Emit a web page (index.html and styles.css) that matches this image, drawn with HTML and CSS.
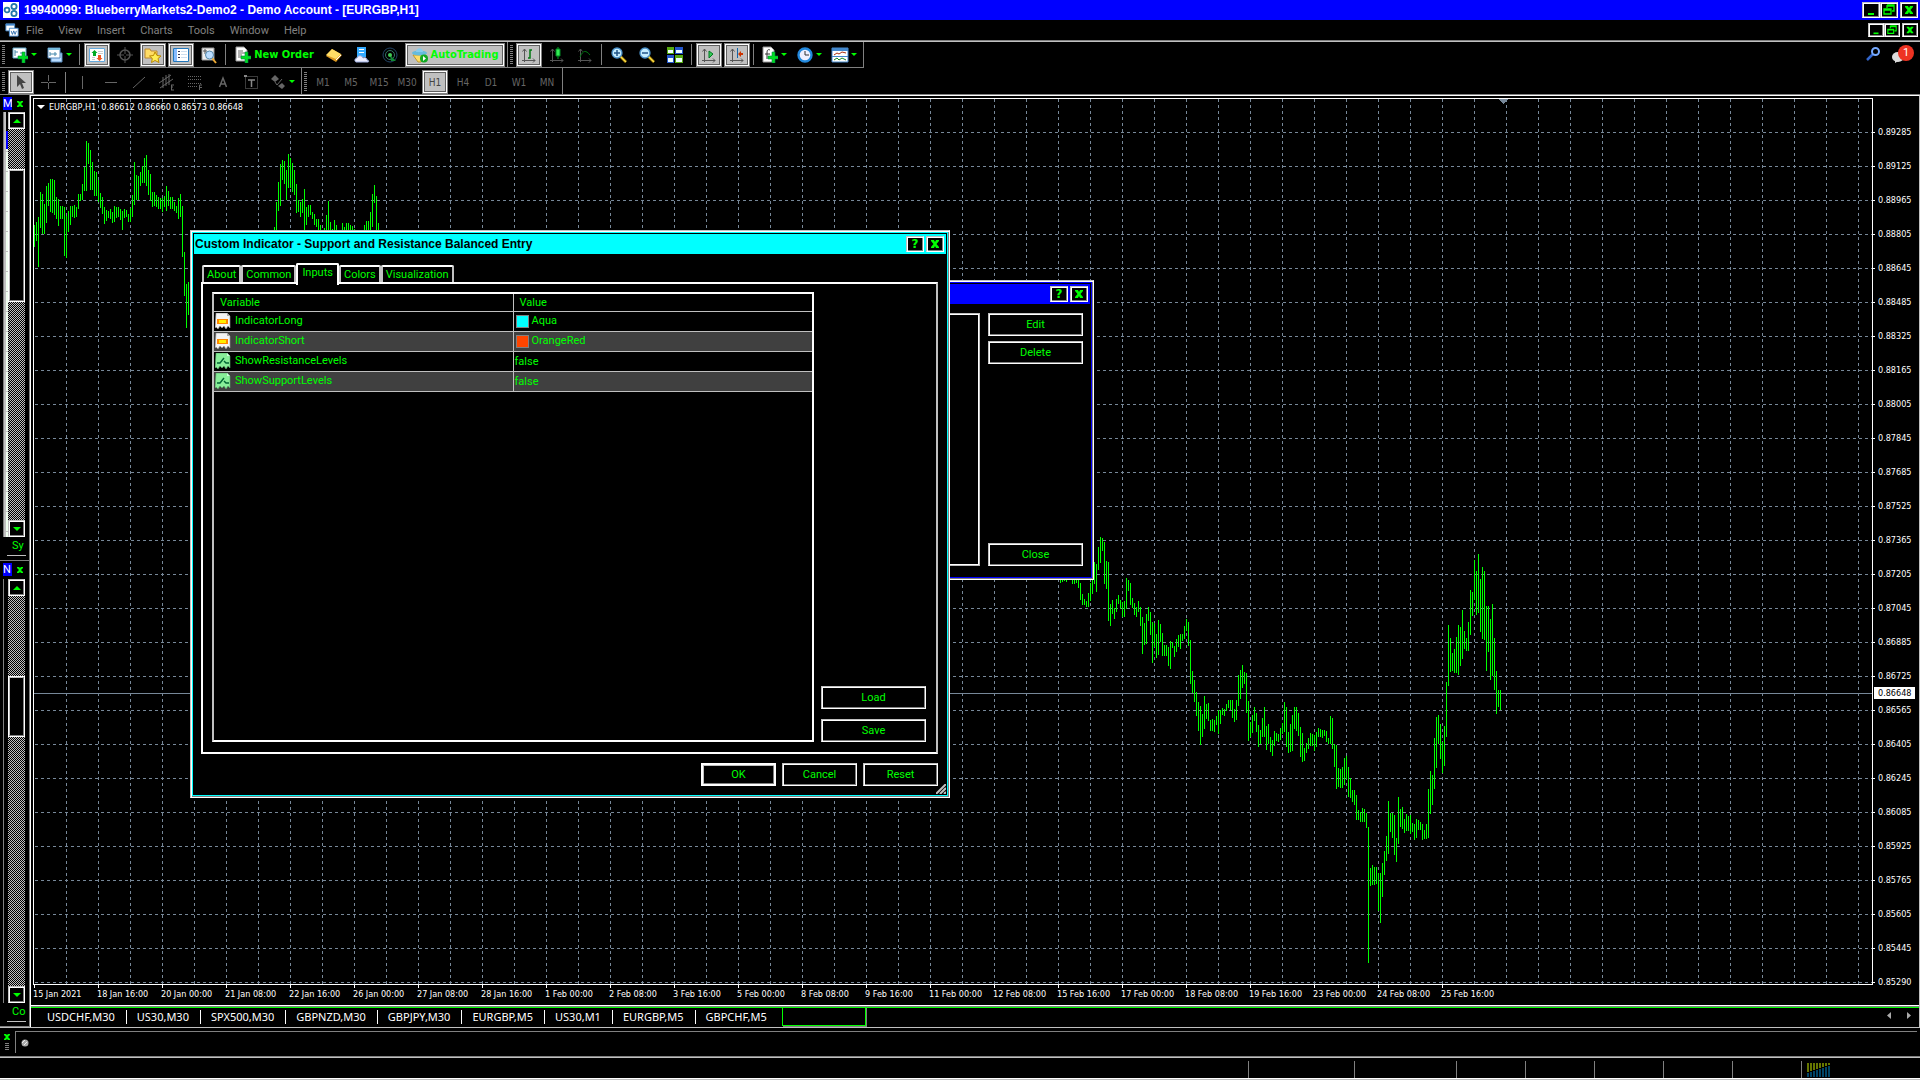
FILE: index.html
```html
<!DOCTYPE html>
<html lang="en">
<head>
  <meta charset="UTF-8" />
  <title>19940099: BlueberryMarkets2-Demo2 - Demo Account - [EURGBP,H1]</title>
  <meta name="viewport" content="width=device-width, initial-scale=1.0" />
  <link rel="stylesheet" href="styles.css">
</head>
<body>

  <!-- shared shapes -->
  <svg class="defs" aria-hidden="true">
    <symbol id="i-min" viewBox="0 0 12 12"><path d="M3 9h6v2H3z" fill="#0f0"/></symbol>
    <symbol id="i-restore" viewBox="0 0 12 12"><path d="M4 1h7v6H9M4 1v3M4 2h7M1 5h7v5H1zM1 6h7" fill="none" stroke="#0f0" stroke-width="1.3"/></symbol>
    <symbol id="i-close" viewBox="0 0 12 12"><path d="M2 2h3l1 2 1-2h3v1L7.500 6 10 9v1H7L6 8l-1 2H2V9l2.500-3L2 3z" fill="#0f0"/></symbol>
    <symbol id="i-x" viewBox="0 0 8 8"><path d="M1 1h2l1 1 1-1h2v1L5 4l2 2v1H5L4 6 3 7H1V6l2-2-2-2z" fill="#0f0"/></symbol>
    <symbol id="i-up" viewBox="0 0 12 12"><path d="M6 4l4 4H2z" fill="#0f0"/></symbol>
    <symbol id="i-down" viewBox="0 0 12 12"><path d="M2 4h8L6 8z" fill="#0f0"/></symbol>
    <symbol id="i-drop" viewBox="0 0 6 4"><path d="M0 0h6L3 3z" fill="#0f0"/></symbol>
    <symbol id="i-axes" viewBox="0 0 16 16"><path d="M3.500 2v13M1 13.500h13M1.500 4.500l2-2.500 2 2.500M12 11.500l2 2-2 2" fill="none" stroke="#555"/></symbol>
    <symbol id="i-plus" viewBox="0 0 16 16"><path d="M10 5h3v4h4v3h-4v4h-3v-4H6V9h4z" fill="#0d2" stroke="#084" stroke-width=".6"/></symbol>
    <symbol id="i-lens" viewBox="0 0 16 16"><path d="M9 9l6 6" stroke="#8a6a00" stroke-width="3"/><path d="M9 9l6 6" stroke="#fd4" stroke-width="1.500"/><circle cx="6" cy="6" r="5" fill="#c4ecff" stroke="#4a90c8" stroke-width="1.300"/></symbol>
    <symbol id="i-color" viewBox="0 0 16 16"><path d="M1 0h11l3 3v12l-2-2-2 3-2-3-2 2-2-2-2 3-2-2-1 1z" fill="#f4f4f4" stroke="#999" stroke-width=".6"/><path d="M12 0v3h3" fill="#aaa"/><path d="M2 6h11v5H2z" fill="#f80"/><path d="M4 7h7v3H4z" fill="#fe0"/></symbol>
    <symbol id="i-bool" viewBox="0 0 16 16"><path d="M1 0h11l3 3v12l-2-2-2 3-2-3-2 2-2-2-2 3-2-2-1 1z" fill="#8e9" stroke="#5a6" stroke-width=".6"/><path d="M12 0v3h3" fill="#cfd"/><path d="M2 10h3l4-5M9 8l2 2h3" fill="none" stroke="#063" stroke-width="1.400"/></symbol>
  </svg>

  <header class="titlebar">
    <svg class="icon" viewBox="0 0 16 16"><path d="M0 0h16v16H0z" fill="#fff"/><g fill="none" stroke="#27a" stroke-width="1.800"><circle cx="4" cy="8" r="2.400"/><circle cx="11" cy="4.500" r="2.600"/><circle cx="11" cy="11.500" r="2.600"/></g></svg>
    <h1>19940099: BlueberryMarkets2-Demo2 - Demo Account - [EURGBP,H1]</h1>
    <div class="win-btns">
      <button aria-label="Minimize"><svg><use href="#i-min"/></svg></button>
      <button aria-label="Restore"><svg><use href="#i-restore"/></svg></button>
      <button class="last" aria-label="Close"><svg><use href="#i-close"/></svg></button>
    </div>
  </header>

  <nav class="menubar">
    <svg class="icon" viewBox="0 0 16 16"><path d="M1 1h10v8H1z" fill="#fff" stroke="#48c"/><path d="M1 1h10v2H1z" fill="#48c"/><path d="M5 6h10v9H5z" fill="#fff" stroke="#48c"/><path d="M7 9l1.500 4L10 9l1.500 4L13 9" fill="none" stroke="#26a"/></svg>
    <button>File</button>
    <button>View</button>
    <button>Insert</button>
    <button>Charts</button>
    <button>Tools</button>
    <button>Window</button>
    <button>Help</button>
    <div class="win-btns small">
      <button aria-label="Minimize chart"><svg><use href="#i-min"/></svg></button>
      <button aria-label="Restore chart"><svg><use href="#i-restore"/></svg></button>
      <button class="last" aria-label="Close chart"><svg><use href="#i-close"/></svg></button>
    </div>
  </nav>

  <div class="toolbars">
    <div class="toolbar-row">
      <div class="toolbar">
        <span class="grip"></span>
        <button class="tool wide" aria-label="New chart"><svg class="icon" viewBox="0 0 16 16"><path d="M1 1h13v10H1z" fill="#fff" stroke="#6ac"/><path d="M3 3v6M3 5h3M8 6h4" stroke="#48a"/><use href="#i-plus" width="16" height="16"/></svg><svg class="drop"><use href="#i-drop"/></svg></button>
        <button class="tool wide" aria-label="Profiles"><svg class="icon" viewBox="0 0 16 16"><path d="M4 6h11v9H4z" fill="#bdf" stroke="#58b"/><path d="M1 1h12v10H1z" fill="#fff" stroke="#58b"/><path d="M1 1h12v2H1z" fill="#7bd"/><path d="M3 5v4M3 7h7M8 5v4" stroke="#48a"/></svg><svg class="drop"><use href="#i-drop"/></svg></button>
        <span class="sep"></span>
        <button class="tool on" aria-label="Market Watch"><svg class="icon" viewBox="0 0 16 16"><path d="M.5 1.500h15v13H.5z" fill="#fff" stroke="#6ad"/><path d="M9 4.500h5M9 6.500h5M3 10.500h3M3 12.500h3" stroke="#ccc"/><path d="M5.500 3l3 3H7v3H4V6H2.500z" fill="#0a2"/><path d="M10.500 14l-3-3H9V8h3v3h1.500z" fill="#e52"/></svg></button>
        <button class="tool" aria-label="Data Window"><svg class="icon" viewBox="0 0 16 16"><circle cx="8" cy="8" r="5" fill="none" stroke="#555" stroke-width="1.500"/><path d="M8 0v7M8 9v7M0 8h7M9 8h7" stroke="#555"/></svg></button>
        <button class="tool on" aria-label="Navigator"><svg class="icon" viewBox="0 0 16 16"><path d="M0 2h5l1 2h6v7H0z" fill="#fd6" stroke="#b83"/><path d="M10 5l2 3.500 4 .5-3 2.500 1 4-4-2-3.500 2 .8-4L4.500 9l4-.5z" fill="#fe5" stroke="#b80"/></svg></button>
        <button class="tool on" aria-label="Terminal"><svg class="icon" viewBox="0 0 16 16"><path d="M.5 1.500h15v13H.5z" fill="#fff" stroke="#27b"/><path d="M1 2h3v12H1z" fill="#8bf"/><path d="M5 4.500h2M5 7.500h2M5 10.500h2" stroke="#335"/><path d="M8 4.500h6M8 7.500h6M8 10.500h6" stroke="#cde"/></svg></button>
        <button class="tool" aria-label="Strategy Tester"><svg class="icon" viewBox="0 0 16 16"><path d="M1 1h12v12H1z" fill="#eee" stroke="#999"/><path d="M4 2v5M2 4h4" stroke="#555"/><path d="M11 11l4 5" stroke="#ea3" stroke-width="2"/><circle cx="8.500" cy="8" r="4" fill="#bdf" stroke="#58a"/></svg></button>
        <span class="sep"></span>
        <button class="tool label order"><svg class="icon" viewBox="0 0 16 16"><path d="M1 0h8l3 3v11H1z" fill="#fff" stroke="#999"/><path d="M3 4h5M3 6h7M3 8h4M3 10h3" stroke="#666"/><use href="#i-plus" width="16" height="16"/></svg>New Order</button>
        <button class="tool" aria-label="MetaEditor"><svg class="icon" viewBox="0 0 16 16"><path d="M0 9l6-7 10 6-6 7z" fill="#d92"/><path d="M0 8l6-6 9 5-5 5z" fill="#fd6"/><path d="M10 13l5-5" stroke="#fff"/></svg></button>
        <button class="tool" aria-label="Cloud"><svg class="icon" viewBox="0 0 16 16"><path d="M3 0h9v10H3z" fill="#3af"/><path d="M5 2.500h5M5 5.500h5" stroke="#fff"/><path d="M2 15c-2-1-1-4 1-4 1-3 5-3 6 0 2-1 4 0 4 2 2 0 2 2 1 2z" fill="#eef" stroke="#9ad"/></svg></button>
        <button class="tool" aria-label="Signals"><svg class="icon" viewBox="0 0 16 16"><g fill="none" stroke="#246"><circle cx="8" cy="8" r="7"/><circle cx="8" cy="8" r="4.500" stroke="#376"/></g><path d="M8 8l6 6h-5z" fill="#183"/><circle cx="8" cy="8" r="2" fill="#4c5"/></svg></button>
        <button class="tool on label auto"><svg class="icon" viewBox="0 0 16 16"><path d="M1 8h13l-5 7H6z" fill="#fd6" stroke="#b93"/><ellipse cx="7.500" cy="6" rx="7.500" ry="2.500" fill="#6bd"/><path d="M4 5c0-5 7-5 7 0z" fill="#8ce"/><circle cx="12" cy="11.500" r="4" fill="#1a2"/><path d="M11 9l3 2.500-3 2.500z" fill="#fff"/></svg>AutoTrading</button>
      </div>
      <div class="toolbar">
        <span class="grip"></span>
        <button class="tool on" aria-label="Bar chart"><svg class="icon" viewBox="0 0 16 16"><use href="#i-axes" width="16" height="16"/><path d="M7 11h2V3h2" fill="none" stroke="#071" stroke-width="1.500"/></svg></button>
        <button class="tool" aria-label="Candlesticks"><svg class="icon" viewBox="0 0 16 16"><use href="#i-axes" width="16" height="16"/><path d="M9 0v12" stroke="#0a2"/><path d="M7 2h4v7H7z" fill="#3e5" stroke="#082"/></svg></button>
        <button class="tool" aria-label="Line chart"><svg class="icon" viewBox="0 0 16 16"><use href="#i-axes" width="16" height="16"/><path d="M3 10c3-7 6-7 10-2" fill="none" stroke="#071"/></svg></button>
        <span class="sep"></span>
        <button class="tool" aria-label="Zoom in"><svg class="icon" viewBox="0 0 16 16"><use href="#i-lens" width="16" height="16"/><path d="M3 6h6M6 3v6" stroke="#258" stroke-width="1.500"/></svg></button>
        <button class="tool" aria-label="Zoom out"><svg class="icon" viewBox="0 0 16 16"><use href="#i-lens" width="16" height="16"/><path d="M3 6h6" stroke="#258" stroke-width="1.500"/></svg></button>
        <button class="tool" aria-label="Tile windows"><svg class="icon" viewBox="0 0 16 16"><path d="M0 0h7v7H0zM8 8h8v8H8z" fill="#5a1"/><path d="M8 0h8v7H8zM0 8h7v8H0z" fill="#25c"/><path d="M1 3h5v3H1zM9 3h6v3H9zM1 11h5v4H1zM9 11h6v4H9z" fill="#eff"/></svg></button>
        <span class="sep"></span>
        <button class="tool on" aria-label="Auto scroll"><svg class="icon" viewBox="0 0 16 16"><use href="#i-axes" width="16" height="16"/><path d="M8 4l4 3-4 4z" fill="#3c5" stroke="#072"/></svg></button>
        <button class="tool on" aria-label="Chart shift"><svg class="icon" viewBox="0 0 16 16"><use href="#i-axes" width="16" height="16"/><path d="M8.500 1v10" stroke="#16a"/><path d="M12 4l-3 3 3 3V8h2V6h-2z" fill="#c30"/></svg></button>
        <span class="sep"></span>
        <button class="tool wide" aria-label="Indicators"><svg class="icon" viewBox="0 0 16 16"><path d="M1 0h8l3 3v12H1z" fill="#fff" stroke="#999"/><path d="M8 3c-2-1-3 0-3 3v6M3 7h5" fill="none" stroke="#333"/><use href="#i-plus" width="16" height="16"/></svg><svg class="drop"><use href="#i-drop"/></svg></button>
        <button class="tool wide" aria-label="Periods"><svg class="icon" viewBox="0 0 16 16"><circle cx="8" cy="8" r="6.500" fill="#eef" stroke="#28d" stroke-width="2.400"/><path d="M8 4v4h4" fill="none" stroke="#333"/></svg><svg class="drop"><use href="#i-drop"/></svg></button>
        <button class="tool wide" aria-label="Templates"><svg class="icon" viewBox="0 0 16 16"><path d="M0 1h16v14H0z" fill="#fff" stroke="#48c"/><path d="M0 1h16v3H0z" fill="#48c"/><path d="M2 8l3-2 2 1 3-2 4 1" fill="none" stroke="#a31"/><path d="M0 9.500h16" stroke="#48c"/><path d="M2 13l3-2 2 2 3-2 4 2" fill="none" stroke="#182"/></svg><svg class="drop"><use href="#i-drop"/></svg></button>
      </div>
      <div class="corner">
        <svg class="icon" viewBox="0 0 16 16"><path d="M1 14l6-6" stroke="#36c" stroke-width="2.500"/><circle cx="9.500" cy="5.500" r="3.500" fill="#000" stroke="#7af" stroke-width="2"/></svg>
        <button class="news" aria-label="1 message"><svg viewBox="0 0 22 18"><ellipse cx="6" cy="12" rx="6" ry="5" fill="#ddd"/><path d="M3 14v4l5-3z" fill="#ddd"/><circle cx="14" cy="8" r="8" fill="#e32"/></svg><span>1</span></button>
      </div>
    </div>

    <div class="toolbar-row lower">
      <div class="toolbar">
        <span class="grip"></span>
        <button class="tool on" aria-label="Cursor"><svg class="icon" viewBox="0 0 16 16"><path d="M4 1v12l3-3 2 5 2-1-2-5h4z" fill="#444"/></svg></button>
        <button class="tool" aria-label="Crosshair"><svg class="icon" viewBox="0 0 16 16"><path d="M7.500 1v6M7.500 9v6M0 8.500h7M8 8.500h7" stroke="#666"/></svg></button>
        <span class="sep"></span>
        <button class="tool" aria-label="Vertical line"><svg class="icon" viewBox="0 0 16 16"><path d="M7.500 2v13" stroke="#666"/></svg></button>
        <button class="tool" aria-label="Horizontal line"><svg class="icon" viewBox="0 0 16 16"><path d="M2 8.500h12" stroke="#666"/></svg></button>
        <button class="tool" aria-label="Trendline"><svg class="icon" viewBox="0 0 16 16"><path d="M2 14L14 3" stroke="#666"/></svg></button>
        <button class="tool" aria-label="Equidistant channel"><svg class="icon" viewBox="0 0 16 16"><path d="M0 9l12-8M1 14L14 5M4 3v11M7 1v11M10 0v11M12 11h3M12 13h2M12 16h3M12.500 11v5" stroke="#666" fill="none"/></svg></button>
        <button class="tool" aria-label="Fibonacci"><svg class="icon" viewBox="0 0 16 16"><path d="M1 2.500h14M1 5.500h14M1 9.500h14M1 12.500h9" stroke="#666" stroke-dasharray="1 1"/><path d="M12.500 16v-5H15M12 13.500h3" stroke="#666" fill="none"/></svg></button>
        <button class="tool" aria-label="Text"><svg class="icon" viewBox="0 0 16 16"><path d="M4.500 13L8 4l3.500 9M6 10h4" stroke="#666" stroke-width="1.500" fill="none"/></svg></button>
        <button class="tool" aria-label="Text label"><svg class="icon" viewBox="0 0 16 16"><path d="M2.500 2.500h12v12h-12z" fill="none" stroke="#777" stroke-dasharray="1 1"/><path d="M5 6h7M8.500 6v7" stroke="#888" stroke-width="1.500"/><path d="M1 1h3v2H1z" fill="#888"/></svg></button>
        <button class="tool wide" aria-label="Arrows"><svg class="icon" viewBox="0 0 16 16"><path d="M5 1l4 4-4 3-4-3zM12 9l3 3-3 3-4-3z" fill="#666"/><path d="M5 8l2 3 5-6" stroke="#666" fill="none"/></svg><svg class="drop"><use href="#i-drop"/></svg></button>
      </div>
      <div class="toolbar periods">
        <span class="grip"></span>
        <button class="tool">M1</button>
        <button class="tool">M5</button>
        <button class="tool">M15</button>
        <button class="tool">M30</button>
        <button class="tool on">H1</button>
        <button class="tool">H4</button>
        <button class="tool">D1</button>
        <button class="tool">W1</button>
        <button class="tool">MN</button>
      </div>
    </div>
  </div>

  <main class="middle">
    <aside class="dock">
      <section class="panel market">
        <div class="panel-head"><b>M</b><button aria-label="Close Market Watch"><svg><use href="#i-x"/></svg></button></div>
        <div class="panel-body">
          <div class="rows"></div>
          <div class="scroll">
            <button aria-label="Up"><svg><use href="#i-up"/></svg></button>
            <div class="track"><div class="thumb"></div></div>
            <button aria-label="Down"><svg><use href="#i-down"/></svg></button>
          </div>
        </div>
        <div class="panel-tab">Sy</div>
      </section>
      <section class="panel navigator">
        <div class="panel-head"><b>N</b><button aria-label="Close Navigator"><svg><use href="#i-x"/></svg></button></div>
        <div class="panel-body">
          <div class="rows"></div>
          <div class="scroll">
            <button aria-label="Up"><svg><use href="#i-up"/></svg></button>
            <div class="track"><div class="thumb"></div></div>
            <button aria-label="Down"><svg><use href="#i-down"/></svg></button>
          </div>
        </div>
        <div class="panel-tab">Co</div>
      </section>
    </aside>

    <div class="workspace">
      <div class="chart">
        <div class="plot">
          <svg id="plotSvg"></svg>
          <p class="quote"><svg viewBox="0 0 8 4"><path d="M0 0h8L4 4z" fill="#fff"/></svg>EURGBP,H1&nbsp; 0.86612 0.86660 0.86573 0.86648</p>
        </div>
        <div class="prices" id="prices"></div>
        <div class="times" id="times"></div>
      </div>
      <div class="chart-tabs">
        <button>USDCHF,M30</button>
        <button>US30,M30</button>
        <button>SPX500,M30</button>
        <button>GBPNZD,M30</button>
        <button>GBPJPY,M30</button>
        <button>EURGBP,M5</button>
        <button>US30,M1</button>
        <button>EURGBP,M5</button>
        <button>GBPCHF,M5</button>
        <button class="current" aria-label="EURGBP,H1"></button>
        <span class="tab-arrows"><svg viewBox="0 0 24 8"><path d="M4 0v7L0 3.500zM20 0v7l4-3.500z" fill="#aaa"/></svg></span>
      </div>
    </div>
  </main>

  <section class="terminal">
    <div class="terminal-side"><svg><use href="#i-x"/></svg><span class="grip"></span></div>
    <div class="terminal-body"><svg viewBox="0 0 8 8"><circle cx="4" cy="4" r="3.500" fill="#aaa"/><path d="M1 4l3-3M3 6l3-3" stroke="#eee"/></svg></div>
  </section>

  <footer class="status">
    <span></span><span></span><span></span><span></span><span></span><span></span><span></span>
    <span class="link"><svg viewBox="0 0 24 14"><path d="M0 0h2v9H0zM3 0h2v8H3zM6 0h2v7H6zM9 0h2v6H9zM12 0h2v5h-2zM15 0h2v4h-2zM18 0h2v3h-2zM21 0h2v2h-2z" fill="#670"/><path d="M0 10h2v4H0zM3 9h2v5H3zM6 8h2v6H6zM9 7h2v7H9zM12 6h2v8h-2zM15 5h2v9h-2zM18 4h2v10h-2zM21 3h2v11h-2z" fill="#046"/></svg></span>
  </footer>

  <!-- indicator list, mostly behind the properties window -->
  <div class="dialog list-dialog">
    <div class="dialog-title">
      <h2></h2>
      <button aria-label="Help" class="q">?</button>
      <button aria-label="Close"><svg><use href="#i-close"/></svg></button>
    </div>
    <div class="list-content">
      <div class="listbox"></div>
      <div class="side-btns">
        <button class="btn">Edit</button>
        <button class="btn">Delete</button>
        <button class="btn bottom">Close</button>
      </div>
    </div>
  </div>

  <div class="dialog props-dialog" role="dialog" aria-labelledby="propsTitle">
    <div class="dialog-title">
      <h2 id="propsTitle">Custom Indicator - Support and Resistance Balanced Entry</h2>
      <button aria-label="Help" class="q">?</button>
      <button aria-label="Close"><svg><use href="#i-close"/></svg></button>
    </div>
    <div class="tabs" role="tablist">
      <button role="tab">About</button>
      <button role="tab">Common</button>
      <button role="tab" class="active" aria-selected="true">Inputs</button>
      <button role="tab">Colors</button>
      <button role="tab">Visualization</button>
    </div>
    <div class="tab-page">
      <div class="table-box">
        <table>
          <thead>
            <tr><th>Variable</th><th>Value</th></tr>
          </thead>
          <tbody>
            <tr><td><svg><use href="#i-color"/></svg>IndicatorLong</td><td><i class="swatch aqua"></i>Aqua</td></tr>
            <tr><td><svg><use href="#i-color"/></svg>IndicatorShort</td><td><i class="swatch orangered"></i>OrangeRed</td></tr>
            <tr><td><svg><use href="#i-bool"/></svg>ShowResistanceLevels</td><td>false</td></tr>
            <tr><td><svg><use href="#i-bool"/></svg>ShowSupportLevels</td><td>false</td></tr>
          </tbody>
        </table>
      </div>
      <div class="file-btns">
        <button class="btn">Load</button>
        <button class="btn">Save</button>
      </div>
    </div>
    <div class="dialog-btns">
      <button class="btn default">OK</button>
      <button class="btn">Cancel</button>
      <button class="btn">Reset</button>
    </div>
    <svg class="resize" viewBox="0 0 10 10"><path d="M0 10L10 0M4 10l6-6M8 10l2-2" stroke="#c0c0c0" stroke-width="2"/></svg>
  </div>

<script>
const BAR_STEP = 2;
const GRID_X = 32;
const GRID_Y = 34;

// Each run: first bar x, y origin, then high,low pairs in thirds of a pixel
const runs = [
  { x: 0, y: 31, bars: "285,350 275,332 262,410 186,293 192,312 222,312 168,278 160,228 147,245 147,248 150,255 201,268 207,287 228,266 228,266 232,378 258,383 243,305 228,284 228,262 225,263 231,262 192,236 192,212 162,210 110,182 33,182 39,102 60,180 96,180 123,198 126,198 150,216 189,233 201,252 231,282 240,272 243,264 237,266 247,278 228,275 231,264 231,262 237,269 243,299 237,264 240,260 252,275 234,275 195,260 96,224 135,210 138,210 126,168 108,158 84,158 75,168 120,195 132,212 186,230 186,228 195,230 201,236 204,238 204,245 198,232 168,242 183,228 201,236 201,238 216,242 228,248 204,266 192,260 228,380 366,498 462,594 456,555" },
  { x: 240, y: 31, bars: "291,400 216,400 156,242 102,228 90,150 93,162 120,210 72,174 84,174 99,186 120,195 162,250 210,245 216,260 207,248 177,400 231,286 225,262 225,255 246,268 252,284 268,292 267,300 285,330 330,340 294,330 255,330 213,330 276,330 297,330 270,330 285,330 330,340 330,340 279,330 291,330 279,330 279,330 285,330 288,330 297,330 330,340 330,340 330,340 330,340 285,330 273,330 273,330 246,330 192,292 165,218 198,330 279,330" },
  { x: 1026, y: 421, bars: "160,188 160,185 160,183 160,185 160,170 160,170 160,191 160,191 160,188 160,204 189,240 222,255 237,255 243,260 219,262 189,243 170,222 126,192 132,216 81,150 51,129 54,94 66,192 123,207 126,303 252,318 240,282 264,297 237,276 225,252 240,266 246,290 243,291 174,266 180,213 189,255 234,264 249,285 261,291 243,276 261,318 291,402 309,375 282,372 261,303 276,345 306,429 309,380 342,414 300,405 312,366 339,408 375,408 375,408 381,438 363,447 366,384 378,411 357,396 345,381 342,387 342,363 318,357 297,333 306,378 360,492 453,520 480,546 516,588 546,633 558,675 582,651 528,627 552,597 549,603 600,633 597,633 600,636 588,615 570,642 570,612 564,585 567,588 552,573 540,564 540,570 540,594 567,606 540,600 465,558 450,537 435,504 456,492 459,579 543,663 606,651 585,639 561,603 579,636 615,681 630,672 594,651 561,651 618,690 612,672 651,696 660,708 633,678 639,663 642,666 624,660 609,642 546,636 561,681 636,699 612,696 585,693 561,627 561,633 579,648 621,711 639,726 684,723 669,699 654,687 639,678 642,678 645,693 636,681 624,651 627,651 630,654 630,648 633,666 654,672 588,672 594,687 672,741 675,807 744,801 747,804 741,804 714,795 708,777 741,831 774,834 810,846 810,855 825,900 870,900 876,906 864,906 867,906 879,924 921,1329 1044,1098 1035,1095 1041,1095 1041,1092 1059,1173 1059,1209 1029,1131 993,1065 948,1023 843,1002 879,936 879,954 885,1005 954,1026 831,972 867,921 861,927 897,939 882,933 888,933 885,942 909,936 912,960 897,954 900,930 906,930 912,960 930,957 912,957 807,954 753,882 765,855 654,807 591,744 585,672 612,717 666,759 618,738 486,651 315,498 354,456 399,453 387,459 351,459 315,465 321,438 270,417 333,387 354,393 306,393 210,345 216,288 120,240 153,285 102,279 177,336 141,357 153,360 258,453 258,396 297,480 252,468 354,510 453,582 510,561 510,570" }
];

const times = ["15 Jan 2021", "18 Jan 16:00", "20 Jan 00:00", "21 Jan 08:00", "22 Jan 16:00", "26 Jan 00:00", "27 Jan 08:00", "28 Jan 16:00", "1 Feb 00:00", "2 Feb 08:00", "3 Feb 16:00", "5 Feb 00:00", "8 Feb 08:00", "9 Feb 16:00", "11 Feb 00:00", "12 Feb 08:00", "15 Feb 16:00", "17 Feb 00:00", "18 Feb 08:00", "19 Feb 16:00", "23 Feb 00:00", "24 Feb 08:00", "25 Feb 16:00"];

function drawPlot() {
  const svg = document.getElementById("plotSvg");
  const w = svg.clientWidth;
  const h = svg.clientHeight;
  let grid = "";
  let bars = "";

  for (let x = 32; x < w; x += GRID_X) grid += `M${x + 0.5} 0V${h}`;
  for (let y = 33; y < h; y += GRID_Y) grid += `M1 ${y + 0.5}H${w}`;

  runs.forEach(run => {
    run.bars.split(" ").forEach((pair, i) => {
      const [high, low] = pair.split(",").map(v => Math.round(v / 3) + run.y);
      bars += `M${run.x + i * BAR_STEP + 0.5} ${high}V${low}`;
    });
  });

  svg.innerHTML = `<path class="grid" d="${grid}"/><path class="bid" d="M0 594.5H${w}"/>` +
    `<path class="bars" d="${bars}"/><path class="shift" d="M1464 0h10l-5 5z"/>`;
}

function fillAxes() {
  const prices = document.getElementById("prices");
  for (let i = 0; i < 25; i++) {
    prices.innerHTML += `<span>${(0.89285 - i * 0.0016).toFixed(5)}</span>`;
  }
  prices.innerHTML += `<span>0.85290</span><b>0.86648</b>`;
  document.getElementById("times").innerHTML = times.map(t => `<span>${t}</span>`).join("");
}

fillAxes();
drawPlot();
window.onresize = drawPlot;
</script>

</body>
</html>
```
FILE: styles.css
```css
* {
  box-sizing: border-box;
}

body {
  margin: 0;
  height: 100vh;
  display: flex;
  flex-direction: column;
  position: relative;
  overflow: hidden;
  background: #000;
  color: #0f0;
  font-family: Roboto, "Liberation Sans", sans-serif;
  font-size: 11px;
  border-bottom: 1px solid #c0c0c0;
}

button {
  margin: 0;
  padding: 0;
  border: none;
  background: none;
  color: inherit;
  font: inherit;
  white-space: nowrap;
}

h1, h2, p {
  margin: 0;
}

svg {
  display: block;
  flex: none;
}

.defs {
  position: absolute;
  width: 0;
  height: 0;
}

.icon {
  width: 16px;
  height: 16px;
  overflow: visible;
}

/* title and menu */
.titlebar {
  height: 20px;
  flex: none;
  display: flex;
  align-items: center;
  padding: 0 2px 0 3px;
  background: #00f;
  color: #fff;
}

.titlebar h1 {
  margin-left: 5px;
  font: bold 12px "Liberation Sans", sans-serif;
}

.win-btns {
  margin-left: auto;
  display: flex;
}

.win-btns button,
.dialog-title button,
.scroll button {
  width: 18px;
  height: 16px;
  display: flex;
  align-items: center;
  justify-content: center;
  background: #000;
  border: 1px solid;
  border-color: #c0c0c0 #fff #fff #c0c0c0;
  box-shadow: inset 1px 1px #fff, inset -1px -1px #808080;
}

.win-btns svg,
.dialog-title svg,
.scroll svg {
  width: 12px;
  height: 12px;
}

.win-btns .last {
  margin-left: 2px;
}

.win-btns.small button {
  width: 16px;
  height: 14px;
}

.win-btns.small svg {
  width: 10px;
  height: 10px;
}

.menubar {
  height: 20px;
  flex: none;
  display: flex;
  align-items: center;
  gap: 15px;
  padding: 0 2px 0 5px;
  color: #808080;
}

.menubar .icon {
  width: 14px;
  height: 14px;
  margin-right: -8px;
}

/* toolbars */
.toolbars {
  flex: none;
  border-top: 1px solid #808080;
  border-bottom: 1px solid #808080;
  box-shadow: inset 0 1px #c0c0c0;
  padding-top: 1px;
}

.toolbar-row {
  display: flex;
  height: 26px;
}

.toolbar-row .toolbar {
  border-bottom: 1px solid #808080;
}

.toolbar-row.lower .toolbar {
  padding-top: 2px;
  border-bottom: none;
}

.toolbar {
  display: flex;
  align-items: center;
  gap: 2px;
  padding: 0 2px;
  border-right: 1px solid #808080;
}

.grip {
  width: 3px;
  height: 20px;
  margin-right: 1px;
  background: repeating-linear-gradient(#808080 0 1px, #000 1px 2px);
}

.tool {
  min-width: 26px;
  height: 24px;
  display: flex;
  align-items: center;
  justify-content: center;
  gap: 3px;
}

.tool.wide {
  min-width: 33px;
}

.tool.on {
  background: #c0c0c0;
  border: 1px solid #808080;
  box-shadow: inset 0 0 0 1px #fff, inset 0 0 0 2px #606060;
}

.tool.label {
  color: #0f0;
  font: bold 11px "DejaVu Sans Condensed", "DejaVu Sans", sans-serif;
  padding: 0 3px;
}

.tool.order {
  min-width: 89px;
}

.tool.auto {
  min-width: 100px;
}

.drop {
  width: 6px;
  height: 4px;
}

.sep {
  width: 1px;
  height: 21px;
  margin: 0 2px 0 1px;
  background: #808080;
}

.corner {
  margin-left: auto;
  display: flex;
  align-items: center;
  gap: 10px;
  padding: 0 6px 2px 0;
}

.news {
  position: relative;
  width: 22px;
  height: 18px;
  color: #fff;
}

.news span {
  position: absolute;
  top: 1px;
  left: 11px;
}

.periods {
  color: #666;
  font: 10px "DejaVu Sans Condensed", "DejaVu Sans", sans-serif;
}

.periods .on {
  color: #444;
}

/* middle */
.middle {
  flex: 1;
  min-height: 0;
  display: flex;
}

.dock {
  width: 30px;
  flex: none;
  display: flex;
  flex-direction: column;
  border-right: 1px solid #808080;
}

.panel {
  flex: 1;
  min-height: 0;
  display: flex;
  flex-direction: column;
  padding: 2px 3px 4px;
  border-bottom: 1px solid #808080;
}

.panel-head {
  height: 15px;
  display: flex;
  align-items: flex-start;
  gap: 4px;
}

.panel-head b {
  width: 9px;
  overflow: hidden;
  background: #00f;
  color: #fff;
  font-weight: normal;
  line-height: 13px;
}

.panel-head svg {
  width: 8px;
  height: 8px;
  margin-top: 3px;
}

.navigator .panel-head {
  height: 16px;
}

.panel-body {
  flex: 1;
  min-height: 0;
  display: flex;
  border-left: 1px solid #808080;
}

.rows {
  width: 4px;
}

.market .rows {
  border-left: 2px solid #c0c0c0;
  background: linear-gradient(#000 19px, #00f 19px 37px, transparent 37px), repeating-linear-gradient(honeydew 0 19px, #c0c0c0 19px 20px);
}

.scroll {
  width: 17px;
  display: flex;
  flex-direction: column;
}

.scroll button {
  width: 17px;
  height: 17px;
}

.track {
  flex: 1;
  background: repeating-conic-gradient(#c0c0c0 0 25%, #000 0 50%) 0 0 / 2px 2px;
  display: flex;
  flex-direction: column;
}

.thumb {
  height: 133px;
  margin-top: 40px;
  background: #000;
  border: 1px solid #fff;
  box-shadow: inset -1px -1px #808080, inset 1px 1px #c0c0c0;
}

.navigator .thumb {
  height: 61px;
  margin-top: 80px;
}

.panel-tab {
  height: 19px;
  margin-left: 4px;
  padding-left: 5px;
  border-bottom: 1px solid #c0c0c0;
  line-height: 17px;
}

.workspace {
  flex: 1;
  min-width: 0;
  display: flex;
  flex-direction: column;
  border: 1px solid #fff;
  border-right-color: #c0c0c0;
  border-bottom: none;
}

.chart {
  flex: 1;
  min-height: 0;
  display: grid;
  grid-template-columns: 1fr 46px;
  grid-template-rows: 1fr 20px;
  padding: 2px 0 0 2px;
  color: #fff;
  font: 9px "DejaVu Sans Condensed", "DejaVu Sans", sans-serif;
}

.plot {
  position: relative;
  border: 1px solid #fff;
  min-height: 0;
}

.plot > svg {
  position: absolute;
  width: 100%;
  height: 100%;
  shape-rendering: crispEdges;
}

.grid {
  stroke: #789;
  stroke-dasharray: 3 3;
}

.bid {
  stroke: #789;
}

.bars {
  stroke: #0f0;
}

.shift {
  fill: #789;
}

.quote {
  position: absolute;
  top: 3px;
  left: 3px;
  display: flex;
  align-items: center;
  gap: 4px;
}

.quote svg {
  width: 8px;
  height: 4px;
}

.prices {
  position: relative;
  grid-row: span 2;
  min-height: 0;
  padding-top: 17px;
}

.prices span {
  display: flex;
  align-items: center;
  height: 34px;
  gap: 3px;
}

.prices span::before {
  content: "";
  width: 2px;
  height: 1px;
  background: #fff;
}

.prices b {
  position: absolute;
  top: 589px;
  left: 1px;
  padding: 0 4px;
  background: #fff;
  color: #000;
  font-weight: normal;
  line-height: 12px;
}

.times {
  display: flex;
  min-width: 0;
  overflow: hidden;
}

.times span {
  flex: 0 0 64px;
  white-space: nowrap;
}

.times span::before {
  content: "";
  display: block;
  width: 1px;
  height: 3px;
  margin: 0 0 1px 1px;
  background: #fff;
}

.chart-tabs {
  height: 22px;
  flex: none;
  display: flex;
  border-top: 1px solid #fff;
  box-shadow: inset 0 1px #808080, inset 0 2px #0f0;
  padding: 1px 0 0 6px;
  color: #fff;
  font: 11px "Noto Sans", sans-serif;
}

.chart-tabs button {
  height: 14px;
  margin-top: 3px;
  padding: 0 11px 0 10px;
  border-right: 1px solid #fff;
  line-height: 10px;
}

.chart-tabs button:nth-child(9) {
  border-right: none;
}

.chart-tabs .current {
  width: 84px;
  height: 19px;
  margin: 0 0 0 4px;
  background: #000;
  border: 1px solid #0f0;
  border-right: 1px solid #0f0;
  box-shadow: 1px 1px #808080;
}

.tab-arrows {
  margin: 5px 8px 0 auto;
}

.tab-arrows svg {
  width: 24px;
  height: 8px;
}

/* terminal and status */
.terminal {
  height: 30px;
  flex: none;
  display: flex;
  padding: 3px 3px 3px 0;
  border-top: 1px solid #c0c0c0;
  border-bottom: 1px solid #808080;
}

.terminal-side {
  width: 15px;
  padding: 2px 3px;
}

.terminal-side svg {
  width: 8px;
  height: 8px;
}

.terminal-side .grip {
  display: block;
  width: 4px;
  height: 7px;
  margin: 2px;
}

.terminal-body {
  flex: 1;
  display: flex;
  align-items: center;
  padding-left: 5px;
  border-top: 1px solid #808080;
  border-left: 1px solid #808080;
}

.terminal-body svg {
  width: 8px;
  height: 8px;
}

.status {
  height: 22px;
  flex: none;
  display: flex;
  justify-content: flex-end;
  padding-top: 3px;
  border-top: 1px solid #c0c0c0;
  border-bottom: 1px solid #fff;
}

.status span {
  width: 69px;
  border-left: 1px solid #808080;
}

.status span:nth-child(1) {
  width: 106px;
}

.status span:nth-child(2) {
  width: 102px;
}

.status .link {
  width: 119px;
  padding: 2px 5px;
}

.status svg {
  width: 24px;
  height: 14px;
}

/* dialogs */
.dialog {
  position: absolute;
  display: flex;
  flex-direction: column;
  background: #000;
  border: 1px solid;
  border-color: #c0c0c0 #fff #fff #c0c0c0;
  padding: 3px;
}

.dialog-title {
  height: 20px;
  flex: none;
  display: flex;
  align-items: center;
  gap: 2px;
  padding: 0 2px 0 1px;
}

.dialog-title h2 {
  flex: 1;
  font: bold 12px "Liberation Sans", sans-serif;
}

.dialog-title .q {
  font: bold 12px "DejaVu Sans", sans-serif;
}

.btn {
  height: 23px;
  border: 1px solid;
  border-color: #c0c0c0 #fff #fff #c0c0c0;
  box-shadow: inset 1px 1px #fff, inset -1px -1px #808080;
}

.btn.default {
  border: 2px solid #fff;
  box-shadow: inset 1px 1px #c0c0c0, inset -1px -1px #808080;
}

.list-dialog {
  left: 600px;
  top: 280px;
  width: 494px;
  height: 300px;
  box-shadow: inset 1px 1px #fff, inset -1px -1px #808080, inset 0 0 0 2px #00f;
}

.list-dialog .dialog-title {
  background: #00f;
}

.list-content {
  flex: 1;
  display: flex;
  gap: 8px;
  padding: 9px 7px 10px;
}

.listbox {
  flex: 1;
  border: 1px solid #c0c0c0;
  box-shadow: inset 0 0 0 1px #fff;
}

.side-btns {
  width: 95px;
  display: flex;
  flex-direction: column;
  gap: 5px;
}

.side-btns .bottom {
  margin-top: auto;
}

.props-dialog {
  left: 190px;
  top: 230px;
  width: 760px;
  height: 568px;
  box-shadow: inset 1px 1px #fff, inset -1px -1px #808080, inset 0 0 0 2px #0ff;
}

.props-dialog .dialog-title {
  background: #0ff;
  color: #000;
}

.props-dialog .dialog-title button {
  color: #0f0;
}

.tabs {
  flex: none;
  display: flex;
  align-items: flex-end;
  height: 29px;
  padding-left: 8px;
}

.tabs button {
  height: 18px;
  padding: 0 3px;
  border: 2px solid #fff;
  border-left-color: #c0c0c0;
  border-right-color: #c0c0c0;
  border-bottom: none;
  border-radius: 2px 2px 0 0;
  line-height: 14px;
}

.tabs .active {
  position: relative;
  height: 22px;
  margin-bottom: -2px;
  padding: 0 4px 4px;
  border-color: #fff;
  background: #000;
}

.tab-page {
  flex: 1;
  min-height: 0;
  display: flex;
  gap: 7px;
  margin: -1px 8px 0 7px;
  padding: 8px 10px 10px 9px;
  border: 2px solid #fff;
  border-right-color: #c0c0c0;
}

.table-box {
  flex: 1;
  border: 2px solid #fff;
  border-left-color: #c0c0c0;
}

table {
  width: 100%;
  table-layout: fixed;
  border-collapse: collapse;
}

th, td {
  height: 20px;
  padding: 0 2px 0 1px;
  border-bottom: 1px solid #c0c0c0;
  border-right: 1px solid #c0c0c0;
  text-align: left;
  font-weight: normal;
}

th {
  height: 17px;
  padding-left: 6px;
}

th:last-child, td:last-child {
  border-right: none;
}

tbody tr:nth-child(even) {
  background: #404040;
}

td svg {
  display: inline-block;
  width: 16px;
  height: 16px;
  margin-right: 4px;
  vertical-align: middle;
}

.swatch {
  display: inline-block;
  width: 13px;
  height: 13px;
  margin: 0 3px 0 1px;
  border: 1px solid #808080;
  vertical-align: middle;
}

.aqua {
  background: aqua;
}

.orangered {
  background: orangered;
}

.file-btns {
  width: 105px;
  display: flex;
  flex-direction: column;
  justify-content: flex-end;
  gap: 10px;
}

.dialog-btns {
  flex: none;
  display: flex;
  justify-content: flex-end;
  gap: 6px;
  padding: 9px 8px 8px;
}

.dialog-btns .btn {
  width: 75px;
}

.resize {
  position: absolute;
  right: 3px;
  bottom: 3px;
  width: 10px;
  height: 10px;
}
```
